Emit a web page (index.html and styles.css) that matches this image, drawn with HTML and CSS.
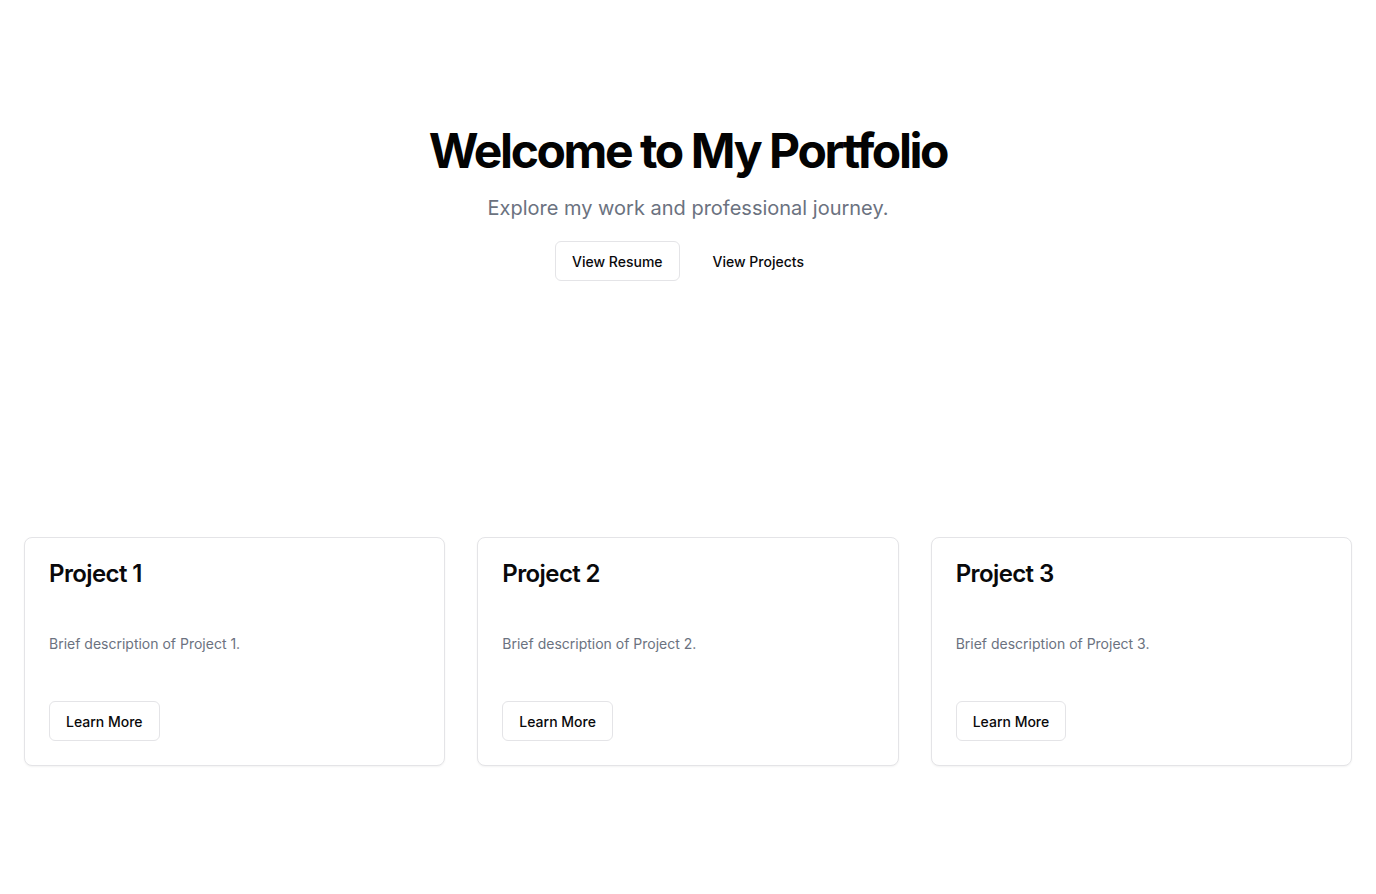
FILE: index.html
```html
<!DOCTYPE html>
<html lang="en">
<head>
<meta charset="utf-8">
<title>Portfolio</title>
<link rel="stylesheet" href="styles.css">
</head>
<body>
<main class="page">
  <section class="hero">
    <h1 class="hero-title">Welcome to My Portfolio</h1>
    <p class="hero-sub">Explore my work and professional journey.</p>
    <div class="hero-actions">
      <a class="btn btn-outline" href="#">View Resume</a>
      <a class="btn btn-ghost" href="#">View Projects</a>
    </div>
  </section>
  <section class="projects">
    <div class="card">
      <div class="card-header"><h3 class="card-title">Project 1</h3></div>
      <div class="card-content"><p class="card-desc">Brief description of Project 1.</p></div>
      <div class="card-footer"><a class="btn btn-outline" href="#">Learn More</a></div>
    </div>
    <div class="card">
      <div class="card-header"><h3 class="card-title">Project 2</h3></div>
      <div class="card-content"><p class="card-desc">Brief description of Project 2.</p></div>
      <div class="card-footer"><a class="btn btn-outline" href="#">Learn More</a></div>
    </div>
    <div class="card">
      <div class="card-header"><h3 class="card-title">Project 3</h3></div>
      <div class="card-content"><p class="card-desc">Brief description of Project 3.</p></div>
      <div class="card-footer"><a class="btn btn-outline" href="#">Learn More</a></div>
    </div>
  </section>
</main>
</body>
</html>
```
FILE: styles.css
```css
* { box-sizing: border-box; }
html, body { margin: 0; padding: 0; background: #ffffff; }
body {
  font-family: Inter, "Noto Sans", "Liberation Sans", sans-serif;
  color: #09090b;
}
.page { display: flex; flex-direction: column; }
.hero {
  display: flex;
  flex-direction: column;
  align-items: center;
  text-align: center;
  padding: 127px 24px 256px;
}
.hero-title {
  margin: 0;
  font-size: 48px;
  line-height: 48px;
  font-weight: 700;
  letter-spacing: -0.05em;
  color: #030303;
}
.hero-sub {
  margin: 19px 0 0;
  font-size: 20px;
  line-height: 28px;
  color: #6b7280;
}
.hero-actions {
  display: flex;
  gap: 16px;
  margin-top: 19px;
}
.btn {
  display: inline-flex;
  align-items: center;
  justify-content: center;
  height: 40px;
  padding: 0 16px;
  border-radius: 6px;
  font-size: 14px;
  font-weight: 500;
  color: #09090b;
  text-decoration: none;
  border: 1px solid transparent;
  background: #fff;
}
.btn-outline { border-color: #e4e4e7; }
.projects {
  display: grid;
  grid-template-columns: repeat(3, 1fr);
  gap: 32px;
  padding: 0 24px 128px;
}
.card {
  border: 1px solid #e4e4e7;
  border-radius: 8px;
  background: #fff;
  box-shadow: 0 1px 2px rgba(0, 0, 0, 0.05);
  display: flex;
  flex-direction: column;
}
.card-header { padding: 24px; }
.card-title {
  margin: 0;
  font-size: 24px;
  line-height: 24px;
  font-weight: 600;
  letter-spacing: -0.025em;
}
.card-content { padding: 24px 24px 23px; }
.card-desc {
  margin: 0;
  font-size: 14px;
  line-height: 20px;
  color: #6b7280;
}
.card-footer { padding: 24px; display: flex; }
```
